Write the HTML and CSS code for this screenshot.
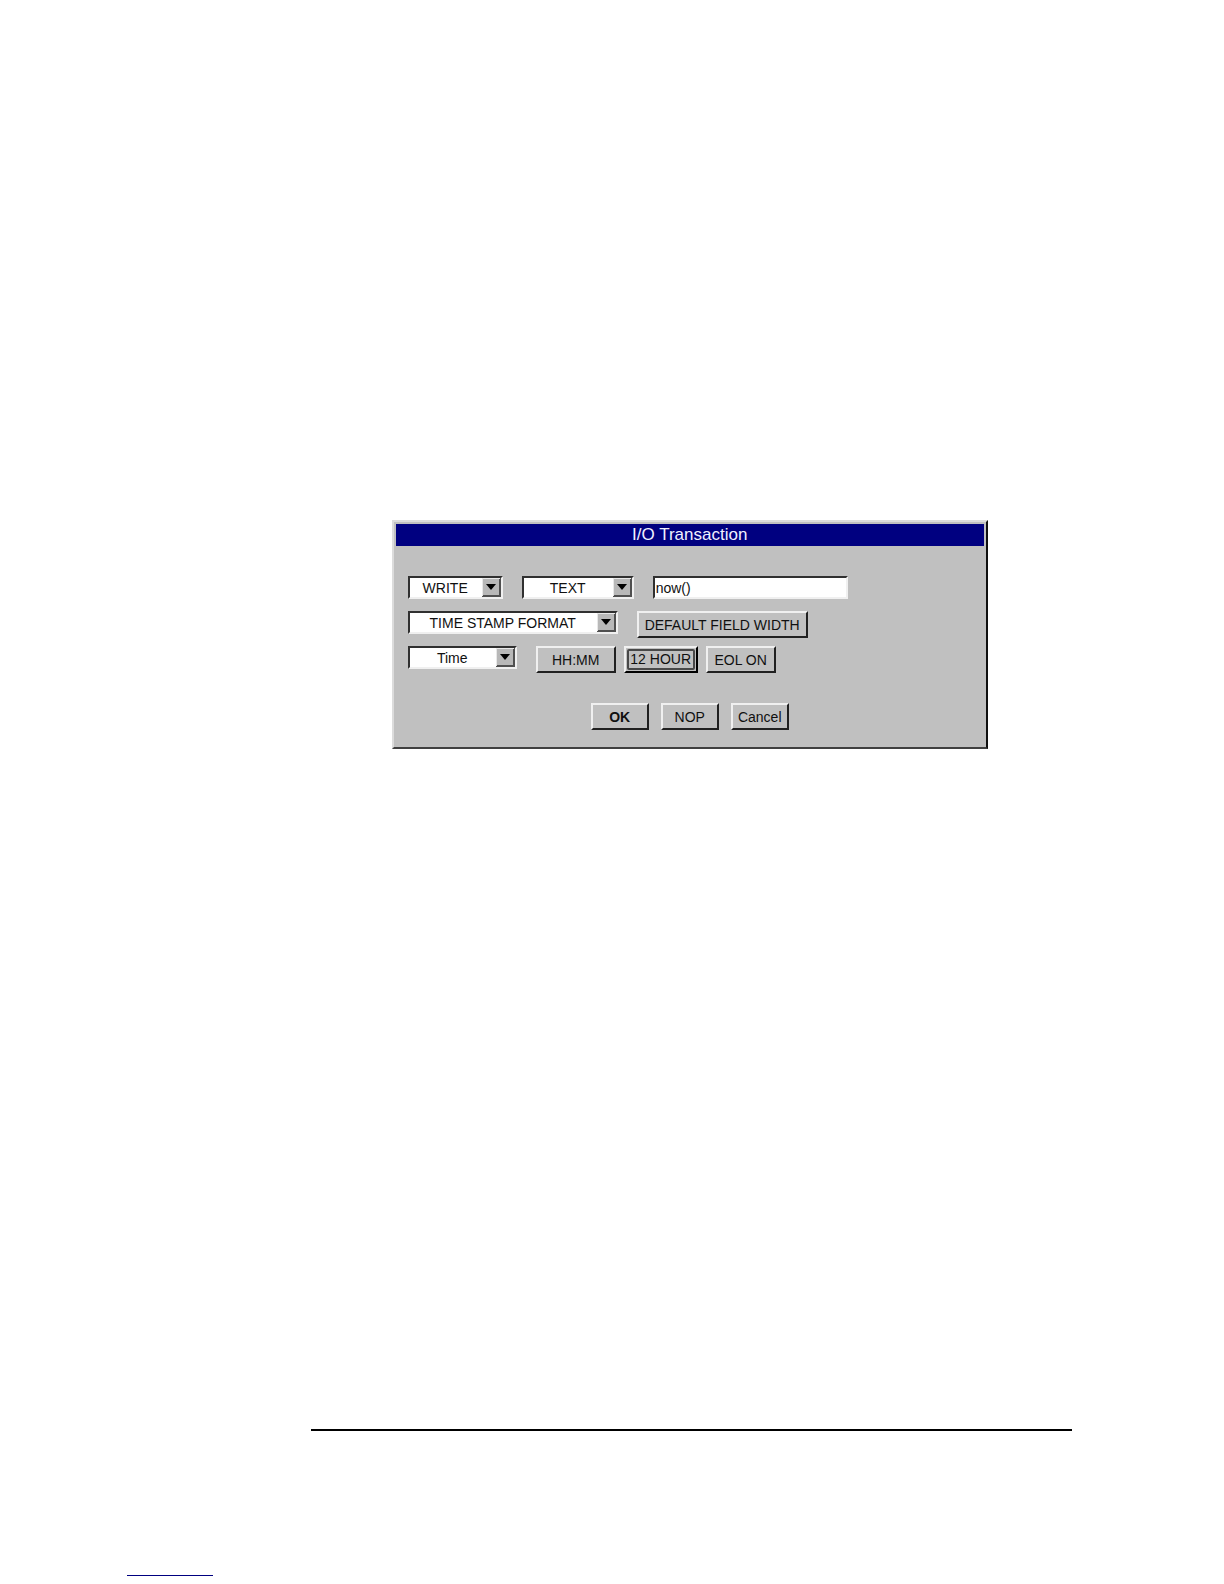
FILE: index.html
```
<!DOCTYPE html>
<html lang="en">
<head>
    <meta charset="UTF-8">
    <meta name="viewport" content="width=device-width, initial-scale=1.0">
    <title>I/O Transaction</title>
    <link rel="stylesheet" href="styles.css">
</head>
<body>
    <main class="page">
        <form class="dialog">
            <h1 class="title">I/O Transaction</h1>

            <div class="fields">
                <div class="row">
                    <div class="dropdown action">
                        <select aria-label="Action"><option>WRITE</option></select>
                        <svg class="arrow" viewBox="0 0 19 19"><path d="M0 0h19v19H0z" fill="#505050"/><path d="M0 0h18v1H1v17H0z" fill="#e8e8e8"/><path d="M1 1h16v16H1z" fill="#b8b8b8"/><path d="M4 6h10L9 12z" fill="#000"/></svg>
                    </div>
                    <div class="dropdown encoding">
                        <select aria-label="Encoding"><option>TEXT</option></select>
                        <svg class="arrow" viewBox="0 0 19 19"><path d="M0 0h19v19H0z" fill="#505050"/><path d="M0 0h18v1H1v17H0z" fill="#e8e8e8"/><path d="M1 1h16v16H1z" fill="#b8b8b8"/><path d="M4 6h10L9 12z" fill="#000"/></svg>
                    </div>
                    <input class="expression" type="text" aria-label="Expression" value="now()">
                </div>

                <div class="row">
                    <div class="dropdown format">
                        <select aria-label="Format"><option>TIME STAMP FORMAT</option></select>
                        <svg class="arrow" viewBox="0 0 19 19"><path d="M0 0h19v19H0z" fill="#505050"/><path d="M0 0h18v1H1v17H0z" fill="#e8e8e8"/><path d="M1 1h16v16H1z" fill="#b8b8b8"/><path d="M4 6h10L9 12z" fill="#000"/></svg>
                    </div>
                    <button class="btn width" type="button">DEFAULT FIELD WIDTH</button>
                </div>

                <div class="row">
                    <div class="dropdown stamp">
                        <select aria-label="Time stamp"><option>Time</option></select>
                        <svg class="arrow" viewBox="0 0 19 19"><path d="M0 0h19v19H0z" fill="#505050"/><path d="M0 0h18v1H1v17H0z" fill="#e8e8e8"/><path d="M1 1h16v16H1z" fill="#b8b8b8"/><path d="M4 6h10L9 12z" fill="#000"/></svg>
                    </div>
                    <div class="toggles">
                        <button class="btn precision" type="button">HH:MM</button>
                        <button class="btn hours focused" type="button"><span>12 HOUR</span></button>
                        <button class="btn eol" type="button">EOL ON</button>
                    </div>
                </div>
            </div>

            <div class="actions">
                <button class="btn ok" type="button">OK</button>
                <button class="btn" type="button">NOP</button>
                <button class="btn" type="button">Cancel</button>
            </div>
        </form>

        <footer>
            <hr class="rule">
            <hr class="link-line">
        </footer>
    </main>
</body>
</html>
```

FILE: styles.css
```
* {
    box-sizing: border-box;
}

body {
    margin: 0;
    background-color: #fff;
    color: #101010;
    font-family: "Liberation Sans", Arial, sans-serif;
    font-size: 14px;
}

.page {
    display: flex;
    flex-direction: column;
    justify-content: space-between;
    min-height: 100vh;
    padding: 520px 0 8px;
}

.dialog {
    width: 48.7%;
    min-width: 480px;
    margin-left: 32%;
    padding: 2px 2px 17px;
    background-color: #c0c0c0;
    border: 2px solid;
    border-color: #dcdcdc #101010 #404040 #dcdcdc;
}

.title {
    margin: 0;
    background-color: #000080;
    color: #f0f0ff;
    font-size: 17px;
    font-weight: normal;
    line-height: 22px;
    text-align: center;
}

.fields {
    display: flex;
    flex-direction: column;
    gap: 8px;
    padding: 30px 12px 0;
}

.row {
    display: flex;
    align-items: flex-start;
    gap: 19px;
    min-height: 27px;
}

.toggles {
    display: flex;
    gap: 8px;
}

.dropdown {
    position: relative;
    height: 23px;
}

.dropdown select,
.expression {
    height: 23px;
    margin: 0;
    background-color: #fff;
    border: 2px solid;
    border-color: #303030 #f0f0f0 #f0f0f0 #303030;
    border-radius: 0;
    color: #101010;
    font: inherit;
}

.dropdown select {
    width: 100%;
    padding: 0 20px 0 0;
    appearance: none;
    text-align: center;
    text-align-last: center;
}

.arrow {
    position: absolute;
    top: 2px;
    right: 2px;
    width: 19px;
    height: 19px;
    pointer-events: none;
}

.action {
    width: 95px;
}

.encoding {
    width: 112px;
}

.format {
    width: 210px;
}

.stamp {
    width: 109px;
}

.expression {
    width: 195px;
    padding: 0 1px;
}

.btn {
    min-width: 58px;
    height: 27px;
    padding: 0;
    background-color: #c0c0c0;
    border: 2px solid;
    border-color: #f0f0f0 #202020 #202020 #f0f0f0;
    color: #101010;
    font: inherit;
    white-space: nowrap;
}

.width {
    width: 171px;
}

.precision {
    width: 80px;
}

.hours {
    width: 74px;
}

.eol {
    width: 70px;
}

.focused {
    padding: 1px;
    border-color: #f0f0f0 #000 #000 #f0f0f0;
}

.focused span {
    display: block;
    border: 2px solid #484848;
    border-radius: 2px;
    line-height: 17px;
}

.actions {
    display: flex;
    justify-content: center;
    gap: 12px;
    padding-top: 30px;
}

.btn.ok {
    font-weight: bold;
}

.rule {
    width: 62.2%;
    height: 2px;
    margin: 0 0 144px 25.4%;
    background-color: #000;
    border: 0;
}

.link-line {
    width: 7%;
    height: 1px;
    margin: 0 0 0 10.4%;
    background-color: #000080;
    border: 0;
}
```
